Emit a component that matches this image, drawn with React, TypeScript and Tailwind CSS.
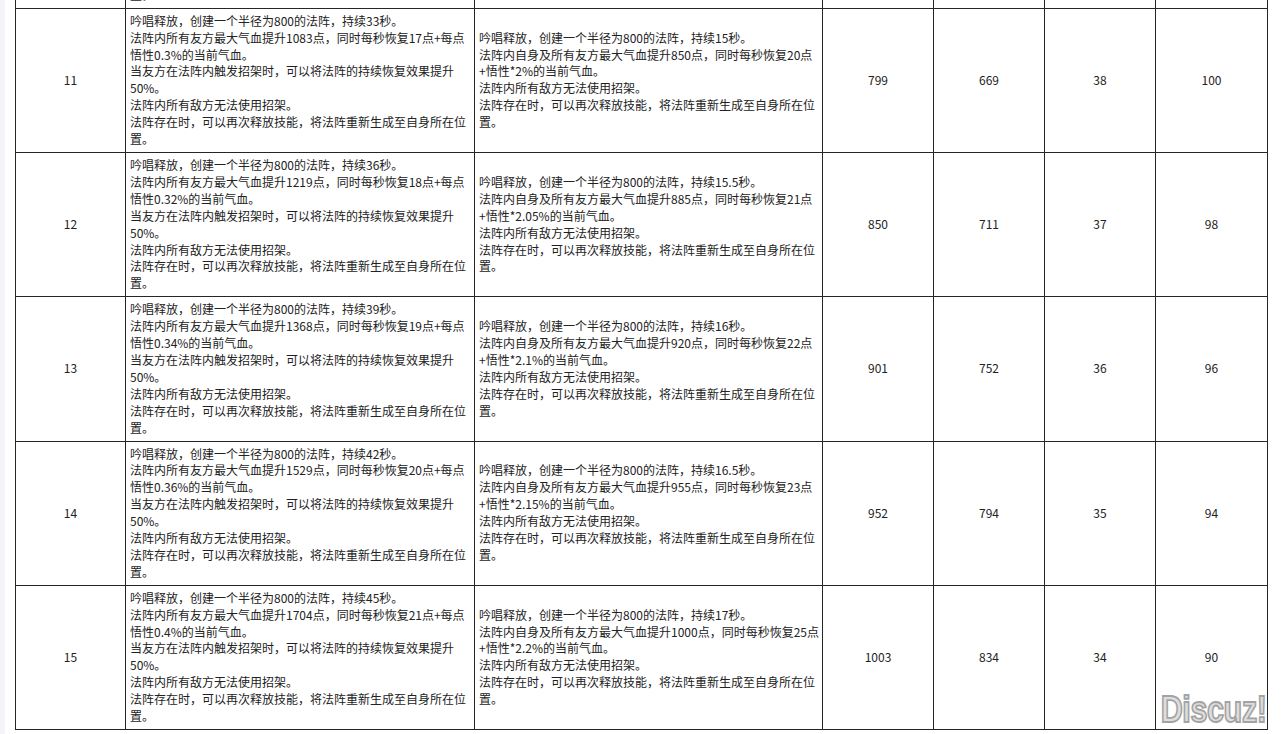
import React from 'react';

type Row = {
  level: number;
  a: string[];
  b: string[];
  nums: [number, number, number, number];
};

const makeA = (sec: number, hp: number, heal: number, pct: string) => [
  `吟唱释放，创建一个半径为800的法阵，持续${sec}秒。`,
  `法阵内所有友方最大气血提升${hp}点，同时每秒恢复${heal}点+每点`,
  `悟性${pct}的当前气血。`,
  '当友方在法阵内触发招架时，可以将法阵的持续恢复效果提升',
  '50%。',
  '法阵内所有敌方无法使用招架。',
  '法阵存在时，可以再次释放技能，将法阵重新生成至自身所在位',
  '置。',
];

const makeB = (sec: string, hp: number, heal: number, pct: string) => [
  `吟唱释放，创建一个半径为800的法阵，持续${sec}秒。`,
  `法阵内自身及所有友方最大气血提升${hp}点，同时每秒恢复${heal}点`,
  `+悟性*${pct}的当前气血。`,
  '法阵内所有敌方无法使用招架。',
  '法阵存在时，可以再次释放技能，将法阵重新生成至自身所在位',
  '置。',
];

// row 10 is only partly in view at the top edge, as in the screenshot
const rows: Row[] = [
  { level: 10, a: makeA(30, 958, 16, '0.28%'), b: makeB('14.5', 815, 19, '1.95%'), nums: [748, 628, 39, 102] },
  { level: 11, a: makeA(33, 1083, 17, '0.3%'), b: makeB('15', 850, 20, '2%'), nums: [799, 669, 38, 100] },
  { level: 12, a: makeA(36, 1219, 18, '0.32%'), b: makeB('15.5', 885, 21, '2.05%'), nums: [850, 711, 37, 98] },
  { level: 13, a: makeA(39, 1368, 19, '0.34%'), b: makeB('16', 920, 22, '2.1%'), nums: [901, 752, 36, 96] },
  { level: 14, a: makeA(42, 1529, 20, '0.36%'), b: makeB('16.5', 955, 23, '2.15%'), nums: [952, 794, 35, 94] },
  { level: 15, a: makeA(45, 1704, 21, '0.4%'), b: makeB('17', 1000, 25, '2.2%'), nums: [1003, 834, 34, 90] },
];

function Lines({ lines }: { lines: string[] }) {
  return (
    <>
      {lines.map((l, i) => (
        <div key={i} className="whitespace-nowrap">
          {l}
        </div>
      ))}
    </>
  );
}

export default function App() {
  return (
    <div
      className="relative flex h-[734px] w-[1282px] overflow-hidden bg-white text-[12px] leading-[16.9px] text-[#222]"
      style={{ fontFamily: '"Noto Sans CJK SC", "Noto Sans", sans-serif' }}
    >
      <div className="w-[5px] shrink-0 bg-[#f3f5f8]" />
      <div className="flex flex-1 flex-col justify-end pb-[4px] pl-[10px]">
        <table className="w-[1252px] table-fixed border-collapse">
          <colgroup>
            <col className="w-[110px]" />
            <col className="w-[349px]" />
            <col className="w-[348px]" />
            <col className="w-[111px]" />
            <col className="w-[111px]" />
            <col className="w-[111px]" />
            <col className="w-[112px]" />
          </colgroup>
          <tbody>
            {rows.map((r) => (
              <tr key={r.level}>
                <td className="border border-[#262626] text-center align-middle">{r.level}</td>
                <td className="border border-[#262626] py-1 pl-[4px] pr-0 align-middle">
                  <Lines lines={r.a} />
                </td>
                <td className="border border-[#262626] py-1 pl-[4px] pr-0 align-middle">
                  <Lines lines={r.b} />
                </td>
                {r.nums.map((n, i) => (
                  <td key={i} className="border border-[#262626] text-center align-middle">
                    {n}
                  </td>
                ))}
              </tr>
            ))}
          </tbody>
        </table>
      </div>
      <div
        className="absolute bottom-[6px] right-[15px] origin-right scale-x-[0.85] text-[36px] font-bold leading-none tracking-[-0.5px] text-[#dedede] [-webkit-text-stroke:1.8px_#a3a3a3]"
        style={{ fontFamily: '"Liberation Sans", Arial, sans-serif' }}
      >
        Discuz!
      </div>
    </div>
  );
}
